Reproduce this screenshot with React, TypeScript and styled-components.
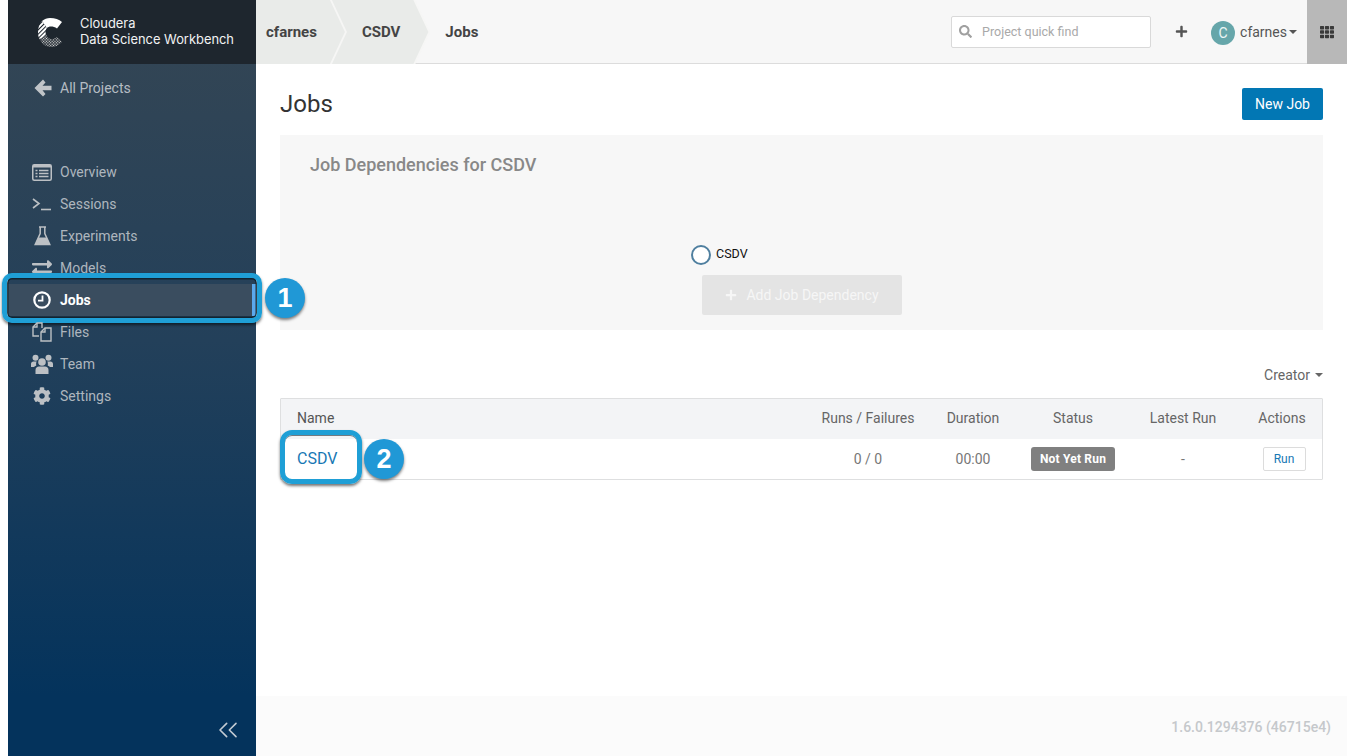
import React from 'react';
import styled, { createGlobalStyle } from 'styled-components';
import { FaCog, FaExchangeAlt, FaPlus, FaSearch, FaTh } from 'react-icons/fa';
import { ChevronsLeft } from 'lucide-react';

const GlobalStyle = createGlobalStyle`
  html, body {
    margin: 0;
    padding: 0;
    background: #fff;
    font-family: Roboto, "Liberation Sans", sans-serif;
    overflow: hidden;
  }
  * {
    box-sizing: border-box;
  }
`;

const Page = styled.div`
  display: flex;
  width: 1347px;
  height: 756px;
  padding-left: 8px;
  background: #fff;
`;

const Sidebar = styled.aside`
  width: 248px;
  height: 756px;
  flex: none;
  display: flex;
  flex-direction: column;
  background: linear-gradient(180deg, #324555 8%, #23405a 45%, #04335c 92%);
`;

const Brand = styled.div`
  height: 64px;
  display: flex;
  align-items: center;
  gap: 18px;
  padding-left: 30px;
  background: #1e262e;
`;

const BrandText = styled.div`
  font-family: Inter, Roboto, sans-serif;
  font-size: 12.9px;
  line-height: 16px;
  color: #f1f2f3;
  white-space: nowrap;
`;

const BackLink = styled.div`
  height: 48px;
  display: flex;
  align-items: center;
  gap: 8px;
  padding-left: 26px;
  color: #b5bcc3;
  font-size: 14px;
`;

const Nav = styled.nav`
  display: flex;
  flex-direction: column;
  margin-top: 44px;
`;

const NavItem = styled.div<{ $active?: boolean }>`
  position: relative;
  height: 32px;
  display: flex;
  align-items: center;
  padding-left: 52px;
  font-size: 14px;
  font-weight: ${(p) => (p.$active ? 700 : 400)};
  color: ${(p) => (p.$active ? '#fff' : '#aeb6be')};
  background: ${(p) => (p.$active ? '#3a4d5f' : 'transparent')};
  border-right: ${(p) => (p.$active ? '4px solid #5ba8ec' : '0')};
`;

const NavIcon = styled.span<{ $active?: boolean }>`
  position: absolute;
  left: 22px;
  top: 0;
  width: 24px;
  height: 32px;
  display: flex;
  align-items: center;
  justify-content: center;
  color: ${(p) => (p.$active ? '#fff' : '#bcc0c4')};
`;

const Highlight = styled.div`
  position: absolute;
  pointer-events: none;
  border: 5px solid #1f9fd6;
  border-radius: 10px;
  box-shadow:
    0 2px 3px rgba(0, 0, 0, 0.55),
    inset 0 0 0 1.5px rgba(15, 30, 40, 0.85);
`;

const JobsHighlight = styled(Highlight)`
  left: -6px;
  top: -11px;
  width: 260px;
  height: 50px;
`;

const Badge = styled.div`
  position: absolute;
  width: 40px;
  height: 40px;
  border-radius: 50%;
  display: flex;
  align-items: center;
  justify-content: center;
  background: #2098d6;
  color: #fff;
  font-family: "Liberation Sans", sans-serif;
  font-weight: 700;
  font-size: 27px;
  box-shadow: 0 2px 3px rgba(0, 0, 0, 0.5);
`;

const JobsBadge = styled(Badge)`
  left: 257px;
  top: -6px;
`;

const Collapse = styled.div`
  margin-top: auto;
  height: 52px;
  padding-right: 12px;
  display: flex;
  align-items: center;
  justify-content: flex-end;
  color: #c3cbd3;
`;

const Main = styled.main`
  flex: 1;
  min-width: 0;
  height: 756px;
  display: flex;
  flex-direction: column;
`;

const TopBar = styled.header`
  height: 64px;
  flex: none;
  display: flex;
  align-items: stretch;
  background: #f7f7f7;
  border-bottom: 1px solid #dcdcdc;
`;

const Crumbs = styled.div`
  display: flex;
  align-items: stretch;
`;

const Crumb = styled.div<{ $first?: boolean; $depth: number }>`
  position: relative;
  z-index: ${(p) => p.$depth};
  margin-right: -15px;
  margin-bottom: -1px;
  padding: 0 30px 0 ${(p) => (p.$first ? '10px' : '30px')};
  display: flex;
  align-items: center;
  font-size: 15px;
  font-weight: 700;
  color: #444;
  background: #f6f6f5;
  clip-path: polygon(0 0, calc(100% - 15px) 0, 100% 50%, calc(100% - 15px) 100%, 0 100%);
  &::before {
    content: '';
    position: absolute;
    inset: 0;
    z-index: -1;
    background: #e9ebe9;
    clip-path: polygon(0 0, calc(100% - 17px) 0, calc(100% - 2px) 50%, calc(100% - 17px) 100%, 0 100%);
  }
`;

const CurrentCrumb = styled.div`
  padding-left: 30px;
  display: flex;
  align-items: center;
  font-size: 15px;
  font-weight: 700;
  color: #444;
`;

const TopRight = styled.div`
  margin-left: auto;
  display: flex;
  align-items: center;
`;

const QuickFind = styled.div`
  width: 200px;
  height: 32px;
  display: flex;
  align-items: center;
  gap: 10px;
  padding-left: 7px;
  background: #fff;
  border: 1px solid #d9d9d9;
  border-radius: 2px;
  color: #a9a9a9;
  font-size: 12.5px;
  svg {
    width: 13px;
    height: 13px;
    color: #a0a0a0;
  }
`;

const AddButton = styled.div`
  width: 60px;
  display: flex;
  justify-content: center;
  color: #555;
  svg {
    width: 13px;
    height: 13px;
  }
`;

const Avatar = styled.div`
  width: 24px;
  height: 24px;
  border-radius: 50%;
  margin: 2px 5px 0 0;
  display: flex;
  align-items: center;
  justify-content: center;
  background: #66a6aa;
  color: #eef6f6;
  font-size: 14px;
`;

const UserName = styled.div`
  font-size: 14px;
  color: #555;
  display: flex;
  align-items: center;
  gap: 2px;
`;

const Caret = styled.span<{ $color: string }>`
  display: inline-block;
  width: 0;
  height: 0;
  border-left: 4px solid transparent;
  border-right: 4px solid transparent;
  border-top: 4px solid ${(p) => p.$color};
`;

const AppsButton = styled.div`
  width: 40px;
  height: 64px;
  margin: 0 0 -1px 10px;
  display: flex;
  align-items: center;
  justify-content: center;
  background: #b8b8b8;
  color: #3a3a3a;
  svg {
    width: 14px;
    height: 14px;
  }
`;

const Content = styled.div`
  flex: 1;
  padding: 24px 24px 0;
`;

const TitleRow = styled.div`
  height: 47px;
  display: flex;
  align-items: flex-start;
  justify-content: space-between;
`;

const Title = styled.h1`
  margin: 0;
  height: 32px;
  line-height: 32px;
  font-size: 24px;
  font-weight: 400;
  color: #333;
`;

const PrimaryButton = styled.button`
  width: 81px;
  height: 32px;
  padding: 0;
  border: 0;
  border-radius: 2px;
  background: #0277b4;
  color: #fff;
  font-family: inherit;
  font-size: 14px;
`;

const DependencyPanel = styled.section`
  height: 195px;
  padding: 19px 30px 0;
  display: flex;
  flex-direction: column;
  background: #f7f7f7;
`;

const PanelTitle = styled.h2`
  margin: 0;
  line-height: 22px;
  font-size: 18px;
  font-weight: 500;
  color: #888;
`;

const JobNode = styled.div`
  margin: 69px 0 0 381px;
  display: flex;
  align-items: center;
  gap: 5px;
  height: 20px;
  font-size: 12.5px;
  line-height: 18px;
  color: #111;
`;

const NodeLabel = styled.span`
  margin-bottom: 2px;
`;

const NodeCircle = styled.span`
  width: 20px;
  height: 20px;
  border-radius: 50%;
  background: #fff;
  border: 2px solid #4f7f9f;
`;

const AddDependency = styled.div`
  width: 200px;
  height: 40px;
  margin: 10px 0 0 392px;
  display: flex;
  align-items: center;
  justify-content: center;
  gap: 9px;
  border-radius: 2px;
  background: #e4e4e4;
  color: #f6f6f6;
  font-size: 14px;
  svg {
    width: 12px;
    height: 12px;
  }
`;

const FilterRow = styled.div`
  height: 68px;
  padding-top: 36px;
  display: flex;
  justify-content: flex-end;
`;

const CreatorFilter = styled.div`
  display: flex;
  align-items: center;
  gap: 5px;
  height: 17px;
  font-size: 14px;
  color: #666;
`;

const JobsTable = styled.div`
  border: 1px solid #dedfe0;
  border-radius: 1px;
`;

const TableRow = styled.div<{ $head?: boolean }>`
  display: grid;
  grid-template-columns: 1fr 120px 90px 110px 110px 84px;
  align-items: center;
  text-align: center;
  height: 40px;
  padding-bottom: ${(p) => (p.$head ? '2px' : '1px')};
  background: ${(p) => (p.$head ? '#f3f4f6' : '#fff')};
  font-size: 14px;
  color: ${(p) => (p.$head ? '#666' : '#777')};
`;

const NameCell = styled.div`
  padding-left: 16px;
  text-align: left;
  color: #555;
`;

const NameLinkCell = styled.div`
  position: relative;
  height: 16px;
  line-height: 16px;
  padding-left: 16px;
  text-align: left;
  font-size: 16px;
  color: #1778b4;
`;

const NameHighlight = styled(Highlight)`
  left: -1px;
  top: -21px;
  width: 82px;
  height: 54px;
  border-radius: 12px;
  box-shadow:
    0 2px 3px rgba(0, 0, 0, 0.55),
    inset 0 1px 0 rgba(30, 40, 50, 0.6);
`;

const NameBadge = styled(Badge)`
  left: 83px;
  top: -12px;
`;

const ActionCell = styled.div`
  padding-left: 4px;
  display: flex;
  justify-content: center;
`;

const StatusLabel = styled.span`
  display: inline-block;
  width: 84px;
  height: 24px;
  line-height: 24px;
  border-radius: 3px;
  background: #808080;
  color: #fff;
  font-size: 12px;
  font-weight: 700;
  letter-spacing: 0.2px;
`;

const SmallButton = styled.button`
  width: 43px;
  height: 24px;
  margin-left: 4px;
  padding: 0;
  border: 1px solid #dcdcdc;
  border-radius: 2px;
  background: #fff;
  color: #1778b4;
  font-family: inherit;
  font-size: 12px;
`;

const Footer = styled.footer`
  height: 60px;
  flex: none;
  padding: 21px 16px 0 0;
  text-align: right;
  background: #fbfbfb;
  font-size: 14px;
  font-weight: 500;
  line-height: 20px;
  color: #c5c8cb;
`;

const CloudLogo = () => (
  <svg width="24" height="29" viewBox="0 0 24 29" aria-hidden="true">
    <defs>
      <pattern id="stripes" width="3" height="3" patternUnits="userSpaceOnUse" patternTransform="rotate(-45)">
        <rect width="3" height="2" fill="#fff" />
      </pattern>
      <pattern id="dots" width="2" height="2" patternUnits="userSpaceOnUse" patternTransform="rotate(45)">
        <rect width="1.2" height="1.2" fill="#e0e0e0" />
      </pattern>
    </defs>
    <path d="M24 4C21 1.500 17 0 12 0C9 0 6.500 1 4 3L9 10C10 9 11 8.500 13 8.500C15 8.500 17 9 19 10.500Z" fill="#fff" />
    <path d="M4 3C1.500 5.500 0 9.500 0 14.500C0 17 .5 19 1.500 21L8.500 17.500C8 16.500 7.500 15.500 7.500 14.500C7.500 12.500 8 11 9 10Z" fill="url(#stripes)" />
    <path d="M1.500 21C4 26 8 29 13 29C17 29 21 27 24 24L19 19C17 20.500 15 21 13 21C11 21 9.500 19.500 8.500 17.500Z" fill="url(#dots)" />
  </svg>
);

const BackArrow = () => (
  <svg width="18" height="18" viewBox="0 0 18 18" fill="#c0c4c8" aria-hidden="true">
    <path d="M9 .5L.5 9 9 17.500l2.500-2.500L8.500 11.200H17.500V6.800H8.500L11.500 3.500z" />
  </svg>
);

const OverviewIcon = () => (
  <svg width="20" height="17" viewBox="0 0 20 17" aria-hidden="true">
    <rect x=".75" y=".75" width="18.500" height="15.500" rx="1.500" fill="none" stroke="currentColor" strokeWidth="1.500" />
    <rect x="1" y="1" width="18" height="2.500" fill="currentColor" />
    <path d="M3.500 6.500h2M7 6.500h9.500M3.500 9.500h2M7 9.500h9.500M3.500 12.500h2M7 12.500h9.500" stroke="currentColor" strokeWidth="1.300" />
  </svg>
);

const SessionsIcon = () => (
  <svg width="20" height="14" viewBox="0 0 20 14" fill="none" stroke="currentColor" strokeWidth="1.600" aria-hidden="true">
    <path d="M1 2l6 4.500L1 11" />
    <path d="M9 12.500h10" />
  </svg>
);

const FlaskIcon = () => (
  <svg width="17" height="20" viewBox="0 0 17 20" aria-hidden="true">
    <path d="M5 1h7M6.200 1v6.500L1.200 18.500h14.600L10.800 7.500V1" fill="none" stroke="currentColor" strokeWidth="1.500" />
    <path d="M4.200 11.500h8.600l3.200 7.500H1z" fill="currentColor" />
  </svg>
);

const ClockIcon = () => (
  <svg width="18" height="18" viewBox="0 0 18 18" fill="none" stroke="currentColor" aria-hidden="true">
    <circle cx="9" cy="9" r="7.700" strokeWidth="2.200" />
    <path d="M9.500 4.500v5.200H5" strokeWidth="1.800" />
  </svg>
);

const FilesIcon = () => (
  <svg width="20" height="20" viewBox="0 0 20 20" fill="none" stroke="currentColor" strokeWidth="1.400" aria-hidden="true">
    <path d="M7 14H1V5l4-4h5v5" />
    <path d="M5 1v4H1" />
    <path d="M9 19V10l4-4h6v13z" />
    <path d="M13 6v4H9" />
  </svg>
);

const TeamIcon = () => (
  <svg width="22" height="20" viewBox="0 0 22 20" fill="currentColor" aria-hidden="true">
    <circle cx="4.500" cy="3.800" r="3" />
    <circle cx="17.500" cy="3.800" r="3" />
    <path d="M0 13V10c0-1.500 1-2.500 2.500-2.500h3.300C5 8.500 5 10 5.300 11.500 4 12 3.500 12.500 3 13z" />
    <path d="M22 13V10c0-1.500-1-2.500-2.500-2.500h-3.300c.8 1 .8 2.500.5 4 1.300.5 1.800 1 2.300 1.500z" />
    <circle cx="11" cy="8" r="3.800" />
    <path d="M4.500 20V16c0-2 1.500-3.500 3.500-3.500h6c2 0 3.500 1.500 3.500 3.500v4z" />
  </svg>
);

const navItems = [
  { label: 'Overview', icon: <OverviewIcon /> },
  { label: 'Sessions', icon: <SessionsIcon /> },
  { label: 'Experiments', icon: <FlaskIcon /> },
  { label: 'Models', icon: <FaExchangeAlt size={20} /> },
  { label: 'Jobs', icon: <ClockIcon />, active: true },
  { label: 'Files', icon: <FilesIcon /> },
  { label: 'Team', icon: <TeamIcon /> },
  { label: 'Settings', icon: <FaCog size={18} /> },
];

const App: React.FC = () => {
  return (
    <Page>
      <GlobalStyle />
      <Sidebar>
        <Brand>
          <CloudLogo />
          <BrandText>
            Cloudera
            <br />
            Data Science Workbench
          </BrandText>
        </Brand>
        <BackLink>
          <BackArrow />
          All Projects
        </BackLink>
        <Nav>
          {navItems.map((item) => (
            <NavItem key={item.label} $active={item.active}>
              <NavIcon $active={item.active}>{item.icon}</NavIcon>
              {item.label}
              {item.active && (
                <>
                  <JobsHighlight />
                  <JobsBadge>1</JobsBadge>
                </>
              )}
            </NavItem>
          ))}
        </Nav>
        <Collapse>
          <ChevronsLeft size={32} strokeWidth={1.2} />
        </Collapse>
      </Sidebar>

      <Main>
        <TopBar>
          <Crumbs>
            <Crumb $first $depth={2}>cfarnes</Crumb>
            <Crumb $depth={1}>CSDV</Crumb>
            <CurrentCrumb>Jobs</CurrentCrumb>
          </Crumbs>
          <TopRight>
            <QuickFind>
              <FaSearch />
              Project quick find
            </QuickFind>
            <AddButton>
              <FaPlus />
            </AddButton>
            <Avatar>C</Avatar>
            <UserName>
              cfarnes
              <Caret $color="#555" />
            </UserName>
            <AppsButton>
              <FaTh />
            </AppsButton>
          </TopRight>
        </TopBar>

        <Content>
          <TitleRow>
            <Title>Jobs</Title>
            <PrimaryButton>New Job</PrimaryButton>
          </TitleRow>

          <DependencyPanel>
            <PanelTitle>Job Dependencies for CSDV</PanelTitle>
            <JobNode>
              <NodeCircle />
              <NodeLabel>CSDV</NodeLabel>
            </JobNode>
            <AddDependency>
              <FaPlus />
              Add Job Dependency
            </AddDependency>
          </DependencyPanel>

          <FilterRow>
            <CreatorFilter>
              Creator
              <Caret $color="#666" />
            </CreatorFilter>
          </FilterRow>

          <JobsTable>
            <TableRow $head>
              <NameCell>Name</NameCell>
              <div>Runs / Failures</div>
              <div>Duration</div>
              <div>Status</div>
              <div>Latest Run</div>
              <ActionCell>Actions</ActionCell>
            </TableRow>
            <TableRow>
              <NameLinkCell>
                CSDV
                <NameHighlight />
                <NameBadge>2</NameBadge>
              </NameLinkCell>
              <div>0 / 0</div>
              <div>00:00</div>
              <div>
                <StatusLabel>Not Yet Run</StatusLabel>
              </div>
              <div>-</div>
              <ActionCell>
                <SmallButton>Run</SmallButton>
              </ActionCell>
            </TableRow>
          </JobsTable>
        </Content>

        <Footer>1.6.0.1294376 (46715e4)</Footer>
      </Main>
    </Page>
  );
};

export default App;
